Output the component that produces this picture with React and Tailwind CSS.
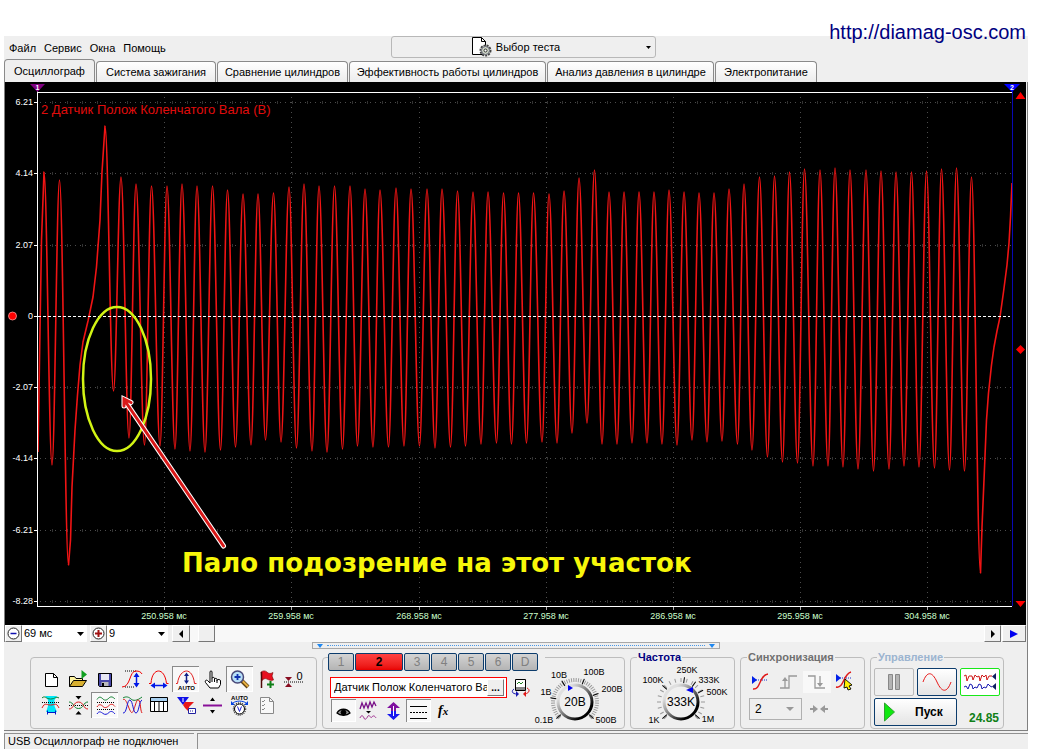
import { useState } from 'react'
import clsx from 'clsx'

const TABS = [
  { label: 'Осциллограф', width: 'w-[91px]' },
  { label: 'Система зажигания', width: 'w-[120px]' },
  { label: 'Сравнение цилиндров', width: 'w-[131px]' },
  { label: 'Эффективность работы цилиндров', width: 'w-[197px]' },
  { label: 'Анализ давления в цилиндре', width: 'w-[167px]' },
  { label: 'Электропитание', width: 'w-[102px]' },
]

const Y_TICKS = [
  ['6.21', 102], ['4.14', 173], ['2.07', 245], ['0', 316],
  ['-2.07', 387], ['-4.14', 458], ['-6.21', 530], ['-8.28', 601],
]

const X_TICKS = [
  ['250.958 мс', 164], ['259.958 мс', 291], ['268.958 мс', 419], ['277.958 мс', 546],
  ['286.958 мс', 673], ['295.958 мс', 800], ['304.958 мс', 927],
]

// Alternating extremes of the crankshaft signal: peak, trough, peak, ...
const TEETH = [
  [105, 126], [113.5, 391], [121, 177], [129, 438], [136, 184], [144.5, 445], [151.5, 186], [160, 446],
  [167, 186], [175, 449], [182, 184], [190, 451], [197, 186], [205, 452], [212.5, 186], [220.5, 450],
  [227.5, 190], [235.5, 447], [243, 194], [251, 445], [258, 194], [265.5, 440], [273.5, 193], [281, 442],
  [289, 187], [296.5, 448], [304, 184], [312, 451], [319, 186], [327, 452], [334.5, 186], [342.5, 449],
  [350, 186], [357.5, 446], [365, 189], [373, 447], [380, 190], [388.5, 447], [396, 188], [404, 446],
  [411, 189], [419.5, 446], [427, 189], [435, 448], [442, 189], [450.5, 447], [457.5, 191], [465.5, 446],
  [473, 192], [481, 444], [488, 192], [496.5, 443], [503.5, 193], [511.5, 444], [518.5, 193], [526.5, 443],
  [533.5, 193], [542, 442], [549, 194], [557, 443], [564, 191], [572, 433], [579, 178], [587, 423],
  [594.5, 170], [602, 444], [609, 192], [617, 444], [624, 192], [632, 443], [639, 192], [647, 443],
  [654, 192], [662, 444], [669, 190], [677, 445], [684, 192], [692, 440], [699, 193], [707, 442],
  [714, 193], [722, 441], [729, 189], [737.5, 444], [744, 184], [752, 450], [759.5, 177], [767.5, 457],
  [774.5, 176], [782.5, 462], [789.5, 172], [797.5, 463], [804.5, 169], [813, 466], [820, 170], [828, 466],
  [835, 168], [843, 467], [850, 170], [858, 469], [866, 170], [873.5, 471], [881, 171], [889, 469],
  [896, 172], [904, 466], [911.5, 172], [919, 467], [926.5, 171], [934.5, 468], [941.5, 169], [949.5, 470],
  [956.5, 168], [964.5, 471], [971.5, 177], [980.5, 573],
]

function smooth(points) {
  let d = ''
  for (let i = 1; i < points.length; i++) {
    const [x0, y0] = points[i - 1]
    const [x1, y1] = points[i]
    const k = (x1 - x0) * 0.36
    d += `C${x0 + k} ${y0} ${x1 - k} ${y1} ${x1} ${y1}`
  }
  return d
}

const SIGNAL =
  'M38 452L40 330' +
  'L41.500 240L44 172' +
  smooth([[44, 172], [52, 465], [59.5, 180], [68.5, 565]]) +
  'L70.500 540L72 487L75 430L77.500 395L80 365L83 342L88 321L93 297L96.500 267L100 220L102 172L105 126' +
  smooth(TEETH) +
  'L982 527L984 480L986.500 420L988.500 393L991.500 365L994 347L997 331L1000 317L1003.500 292L1007 265L1009 243L1010.500 217L1012 183'

function Scope() {
  return (
    <svg viewBox="5 82 1021 543" className="block w-full bg-black" fontFamily="'Liberation Sans', Arial, sans-serif">
      {/* grid */}
      {Y_TICKS.map(([label, y]) => (
        <g key={label}>
          {label !== '0' && (
            <>
              <path d={`M40 ${y + 0.5}H1012`} stroke="#4c4c4c" strokeDasharray="1 4" />
              <path d={`M52 ${y + 0.5}H1012`} stroke="#333" strokeWidth="3" strokeDasharray="1 14" />
            </>
          )}
          <path d={`M34 ${y + 0.5}H38`} stroke="#fff" />
          <text x="33" y={y + 3} fill="#fff" fontSize="9" textAnchor="end">{label}</text>
        </g>
      ))}
      {X_TICKS.map(([label, x]) => (
        <g key={label}>
          <path d={`M${x + 0.5} 97V606`} stroke="#4c4c4c" strokeDasharray="1 4" />
          <path d={`M${x + 0.5} 607V610`} stroke="#aaa" />
          <text x={x} y="619" fill="#cfc" fontSize="9" textAnchor="middle">{label}</text>
        </g>
      ))}

      <path d={SIGNAL} fill="none" stroke="#f01414" strokeWidth="1.600" strokeLinejoin="round" />
      <path d="M38 316.500H1010" stroke="#fff" strokeDasharray="3 2" />

      {/* axes and markers */}
      <path d="M37.500 88V607M37 92.500H1012M37 606.500H1012" stroke="#fff" fill="none" />
      <path d="M1012.500 88V606" stroke="#0808b4" />
      <path d="M30 84H45L37.500 92Z" fill="#800080" />
      <path d="M1004 84H1020L1012 92Z" fill="#0000ff" />
      <text x="37.500" y="90" fill="#fff" fontSize="7" fontWeight="bold" textAnchor="middle">1</text>
      <text x="1012" y="90" fill="#fff" fontSize="7" fontWeight="bold" textAnchor="middle">2</text>
      <path d="M1015.500 99L1020.500 92L1025.500 99Z M1015.500 601H1025.500L1020.500 607Z" fill="#ff0000" />
      <path d="M1020.500 345L1025 349.500L1020.500 354L1016 349.500Z" fill="#ff0000" />
      <circle cx="12.500" cy="316" r="4" fill="#ff0000" stroke="#ff9a9a" strokeWidth="0.800" />
      <text x="41" y="114" fill="#e00c0c" fontSize="13">2 Датчик Полож Коленчатого Вала (В)</text>

      {/* annotation */}
      <ellipse cx="117" cy="379" rx="34" ry="72" fill="none" stroke="#d2f414" strokeWidth="2.500" />
      <path d="M223.500 546L125 401M124 406V399L131 402.500" fill="none" stroke="#fff" strokeWidth="5" strokeLinecap="round" />
      <path d="M223.500 546L125 401M124 406V399L131 402.500" fill="none" stroke="#d81818" strokeWidth="3" strokeLinecap="round" />
      <text x="182" y="572" fill="#f7f70a" fontSize="26" fontWeight="bold" fontFamily="'DejaVu Sans', Verdana, sans-serif">
        Пало подозрение на этот участок
      </text>
    </svg>
  )
}

function Glyph({ children, className = 'h-[26px] w-[27px]', box = '0 0 27 26' }) {
  return (
    <svg viewBox={box} className={className} fill="none" stroke="#000" aria-hidden="true">
      {children}
    </svg>
  )
}

const TOOLS = [
  {
    name: 'Новый',
    icon: (
      <>
        <path d="M8.500 7.500H16.500L20.500 11.500V20.500H8.500Z" fill="#fff" />
        <path d="M16.500 7.500V11.500H20.500" />
      </>
    ),
  },
  {
    name: 'Открыть',
    icon: (
      <>
        <path d="M5.500 20.500V10.500H10.500L12 12.500H18.500V14.500" fill="#fff4a0" />
        <path d="M5.500 20.500L9.500 14.500H22.500L18.500 20.500Z" fill="#d8b030" />
        <path d="M17.500 4V13L23 8.500Z" fill="#10a020" stroke="none" />
      </>
    ),
  },
  {
    name: 'Сохранить',
    icon: (
      <>
        <path d="M7.500 7.500H20.500V20.500H8.500L7.500 19.500Z" fill="#4848a8" />
        <path d="M10 8H18V14H10Z" fill="#e8e8f4" stroke="none" />
        <path d="M10.500 16H17.500V20H10.500Z" fill="#bbb" stroke="none" />
        <path d="M12 17V20" strokeWidth="2" />
      </>
    ),
  },
  {
    name: 'Амплитуда',
    icon: (
      <>
        <path d="M7 5H18M7 21H17" strokeDasharray="1 1" />
        <path d="M4 21C13 21 11 5 18 5C21 5 23 6 24 8" stroke="#f00000" />
        <path d="M18.500 8V20" stroke="#0018e8" strokeWidth="1.500" />
        <path d="M15.500 11L18.500 6.500L21.500 11ZM15.500 17L18.500 21.500L21.500 17Z" fill="#0018e8" stroke="none" />
      </>
    ),
  },
  {
    name: 'Период',
    icon: (
      <>
        <path d="M4 17.500H6C6.500 9 10 5 13.500 5S20.500 9 21.500 17.500H23.500" stroke="#f00000" />
        <path d="M9 19.500H19" stroke="#0018e8" strokeWidth="1.500" />
        <path d="M10 16.500L5.500 19.500L10 22.500ZM18 16.500L22.500 19.500L18 22.500Z" fill="#0018e8" stroke="none" />
      </>
    ),
  },
  {
    name: 'Автомасштаб',
    pressed: true,
    icon: (
      <>
        <path d="M4 17.500H5.500C6.500 9 11 5 14.500 5S21.500 9 22.500 17.500H24.500" stroke="#e02020" />
        <path d="M14.500 9V15" stroke="#102088" strokeWidth="1.500" />
        <path d="M12 10L14.500 6.500L17 10ZM12 14.500L14.500 18L17 14.500Z" fill="#102088" stroke="none" />
        <text x="14.500" y="24" fontSize="6" fontWeight="bold" textAnchor="middle" fill="#000" stroke="none">AUTO</text>
      </>
    ),
  },
  {
    name: 'Рука',
    icon: (
      <path
        d="M11 22L6.500 16.500C5.500 14.500 7.500 13.500 8.500 14.500L11 17V6C11 4.500 13 4.500 13 6V12.500C13 11 15.500 11 15.500 12.500V13.500C15.500 12 18 12 18 13.500V14.500C18 13 21.500 13 21.500 15V18.500L19.500 22ZM13 12.500V16M15.500 13V16M18 14V17"
        fill="#fff"
      />
    ),
  },
  {
    name: 'Масштаб',
    pressed: true,
    icon: (
      <>
        <path d="M16 15L22 21" stroke="#604010" strokeWidth="4" />
        <path d="M16.500 15L22 20.500" stroke="#e8b040" strokeWidth="2" />
        <circle cx="11.500" cy="11" r="6" fill="#b8e0f8" stroke="#484878" strokeWidth="1.500" />
        <path d="M8.500 11H14.500M11.500 8V14" stroke="#1030b0" strokeWidth="1.800" />
      </>
    ),
  },
  {
    name: 'Маркер',
    icon: (
      <>
        <path d="M8 6C11 4 13 5 14.500 6.500S18 7.500 20 6.500L19 10L20.500 14C18 15 16 14 14 13S10.500 13 9 14.500Z" fill="#e81020" stroke="#700" strokeWidth="0.600" />
        <path d="M8.500 6V22" stroke="#500808" strokeWidth="1.500" />
        <path d="M14 18.500H21M17.500 15V22" stroke="#108018" strokeWidth="2" />
      </>
    ),
  },
  {
    name: 'Ноль',
    icon: (
      <>
        <path d="M4 16H23" strokeDasharray="1 1" />
        <path d="M5 11H12L8.500 15ZM5 21H12L8.500 17Z" fill="#880c20" stroke="none" />
        <text x="19.500" y="14" fontSize="11" textAnchor="middle" fill="#000" stroke="none">0</text>
      </>
    ),
  },
  {
    name: 'Полоса',
    icon: (
      <>
        <path d="M8 4H20L17.500 8V14L20 20H9L11 14V8Z" fill="#00e8f8" stroke="none" />
        <path d="M5 6C8 3 9 7 13.500 7S19 4 22 6" stroke="#108030" />
        <path d="M5 10.500H23" strokeDasharray="1 1" />
        <path d="M5 16C8 10 9 13 13.500 13S19 10 22 16" stroke="#e01818" />
        <path d="M11 20.500H18M10.500 18.500V22.500M18.500 18.500V22.500" stroke="#0018c8" />
      </>
    ),
  },
  {
    name: 'Совместить',
    icon: (
      <>
        <path d="M11.500 4H17.500L14.500 7.500ZM11.500 22.500H17.500L14.500 19Z" fill="#000" stroke="none" />
        <path d="M5 13.500H24" strokeDasharray="1 1" />
        <path d="M5 10C10 10 9 16.500 14.500 16.500S19 10 24 10" stroke="#108030" />
        <path d="M5 17C10 17 9 10 14.500 10S19 17 24 17" stroke="#e01818" />
      </>
    ),
  },
  {
    name: 'Раздельно',
    pressed: true,
    icon: (
      <>
        <path d="M6 7.500C8 4 10 5 12 7S16 8 18 6S22 5 24 7" stroke="#108030" />
        <path d="M6 15C8 11.500 10 12.500 12 14.500S16 15.500 18 13.500S22 12 24 14.500" stroke="#e01818" />
        <path d="M6 22C8 18.500 10 20 12 21.500S16 22.500 18 20.500S22 19.500 24 22" stroke="#1818d8" />
        <path d="M6 10.500H24M6 17.500H24" strokeDasharray="1 1" />
      </>
    ),
  },
  {
    name: 'Наложение',
    icon: (
      <>
        <path d="M5 6C8 4 11 5 13 7S19 9 24 5" stroke="#108030" />
        <path d="M5 8C8 4 11 19 13.500 20.500S18 6 20.500 8S22 18 24 21" stroke="#e01818" />
        <path d="M5 21C9 22 9 7 12 8S15 21 18 21S21 9 24 8" stroke="#1818d8" />
      </>
    ),
  },
  {
    name: 'Таблица',
    icon: (
      <>
        <path d="M5.500 5.500H22.500V19.500H5.500Z" fill="#fff" />
        <path d="M6 6H22V9H6Z" fill="#a8d0f0" stroke="none" />
        <path d="M5.500 9.500H22.500M9.500 9.500V19.500M14 9.500V19.500M18.500 9.500V19.500" />
      </>
    ),
  },
  {
    name: 'Фильтр',
    icon: (
      <>
        <path d="M5 5H17L11 13Z" fill="#1010e8" stroke="none" />
        <path d="M13 10H22L17 15V20L13 16L11 13Z" fill="#e81818" stroke="none" />
        <path d="M11 6V10" stroke="#fff" />
        <path d="M16.500 16.500H23.500V21.500H16.500Z" fill="#fff" stroke="#2020a0" />
        <path d="M18 19H22" stroke="#2020a0" strokeDasharray="1 1" />
      </>
    ),
  },
  {
    name: 'Сдвиг',
    icon: (
      <>
        <path d="M4 13.500H23" stroke="#881098" strokeWidth="2" />
        <path d="M11 9L13.500 5.500L16 9ZM11 18L13.500 21.500L16 18Z" fill="#000" stroke="none" />
      </>
    ),
  },
  {
    name: 'Авто вольтметр',
    icon: (
      <>
        <text x="13.500" y="8" fontSize="6" fontWeight="bold" textAnchor="middle" fill="#000" stroke="none">AUTO</text>
        <path d="M7 11C10 8.500 17 8.500 20 11" stroke="#0040e0" />
        <path d="M5 9V13H9ZM22 9V13H18Z" fill="#0040e0" stroke="none" />
        <circle cx="13.500" cy="17" r="6" strokeWidth="1.500" strokeDasharray="1 1" stroke="#444" />
        <circle cx="13.500" cy="17" r="5" fill="#fff" />
        <path d="M11.500 14.500L13.500 19.500L15.500 14.500" stroke="#2020d0" />
      </>
    ),
  },
  {
    name: 'Список',
    icon: (
      <g stroke="#888">
        <path d="M7.500 5.500H16.500L20.500 9.500V21.500H7.500Z" fill="#f8f8f8" />
        <path d="M16.500 5.500V9.500H20.500" />
        <path d="M9 9L10 10L12 8M9 13L10 14L12 12M9 17L10 18L12 16" />
      </g>
    ),
  },
]

function Toolbar() {
  return (
    <div className="mt-[6px] flex w-[287px] shrink-0 flex-wrap content-start rounded-[4px] border border-[#bdbdbd] pt-2 pl-[6px]">
      {TOOLS.map((tool) => (
        <button
          key={tool.name}
          aria-label={tool.name}
          className={clsx(
            'h-[26px] w-[27px]',
            tool.pressed && 'bg-[#f8f8f8] shadow-[inset_1px_1px_0_#8a8a8a,inset_-1px_-1px_0_#fff]'
          )}
        >
          <Glyph>{tool.icon}</Glyph>
        </button>
      ))}
    </div>
  )
}

function Knob({ name, value, labels, fine, pointer }) {
  const ticks = []
  const step = fine ? 6 : 15
  for (let a = -135; a <= 135; a += step) ticks.push(a)
  return (
    <svg viewBox="0 0 90 64" className="h-16 w-[90px]" role="img" aria-label={name} fontFamily="'Liberation Sans', Arial, sans-serif">
      <defs>
        <linearGradient id={`rim-${name}`} x1="0" y1="0" x2="1" y2="1">
          <stop offset="0.200" stopColor="#e0e0e0" />
          <stop offset="0.550" stopColor="#666" />
          <stop offset="0.800" stopColor="#000" />
        </linearGradient>
      </defs>
      {ticks.map((a) => (
        <path key={a} d="M41 14V18" stroke="#999" transform={`rotate(${a} 41 38)`} />
      ))}
      {labels.map(([text, x, y, angle]) => (
        <g key={text}>
          <path d="M41 13V19" stroke="#000" transform={`rotate(${angle} 41 38)`} />
          <text x={x} y={y} fontSize="9" textAnchor="middle">{text}</text>
        </g>
      ))}
      <circle cx="41" cy="38" r="17" fill="#f0f0f0" stroke={`url(#rim-${name})`} strokeWidth="3" />
      <path d={pointer} fill="#0000f0" />
      <text x="41" y="42" fontSize="12" textAnchor="middle">{value}</text>
    </svg>
  )
}

const CHANNELS = ['1', '2', '3', '4', '5', '6', 'D']

const MODES = [
  {
    name: 'Показать',
    pressed: true,
    icon: (
      <>
        <path d="M6 14C9 9 16 9 19 14C16 17 9 17 6 14Z" fill="#999" strokeWidth="1.300" />
        <circle cx="12.500" cy="13.500" r="2.500" fill="#000" />
      </>
    ),
  },
  {
    name: 'Сглаживание',
    icon: (
      <>
        <path d="M4 10L6 4L8 9L10 4L12 9L14 3L16 8L18 3L20 7" stroke="#781088" strokeWidth="1.300" />
        <path d="M10 12H15L12.500 14.500Z" fill="#000" stroke="none" />
        <path d="M4 19C5 16 7 16 8 19S11 19 12 17S15 20 16 18S19 17 20 19" stroke="#a03090" />
      </>
    ),
  },
  {
    name: 'Инверсия',
    icon: (
      <>
        <path d="M12.500 3L19 9H15V12H10V9H6Z" fill="#8010a0" stroke="none" />
        <path d="M12.500 21L19 15H15V12H10V15H6Z" fill="#1818f0" stroke="none" />
        <path d="M12.500 7V17" stroke="#fff" />
      </>
    ),
  },
  {
    name: 'Уровни',
    pressed: true,
    icon: (
      <>
        <path d="M4 7.500H21M4 19.500H21" />
        <path d="M4 13.500H21" strokeDasharray="2 1" />
      </>
    ),
  },
  {
    name: 'Функция',
    icon: (
      <text x="7" y="16" fontSize="14" fontStyle="italic" fontWeight="bold" fill="#000" stroke="none" fontFamily="'Liberation Serif', serif">
        f<tspan fontSize="11">x</tspan>
      </text>
    ),
  },
]

function ChannelPanel() {
  const [active, setActive] = useState('2')
  return (
    <div className="mt-[6px] flex w-[303px] shrink-0 rounded-[4px] border border-[#bdbdbd] pl-[5px]">
      <div className="-mt-[5px] w-[206px]">
        <div className="flex w-[217px] gap-px bg-[#efefef]">
          {CHANNELS.map((ch) => (
            <button
              key={ch}
              onClick={() => setActive(ch)}
              className={clsx(
                'h-[18px] rounded-[2px] border border-[#0c3c6c] text-[12px] leading-[16px]',
                ch === active
                  ? 'w-12 bg-linear-to-b from-[#ff4040] to-[#e80000] font-bold text-black'
                  : 'w-[26px] bg-linear-to-b from-[#d4d4d4] to-[#b4b4b4] text-[#808080]'
              )}
            >
              {ch}
            </button>
          ))}
        </div>
        <div className="mt-[6px] flex items-center gap-1 pl-0.5">
          <div className="flex h-[21px] w-[177px] items-center border border-[#ff0000] bg-white pr-0.5">
            <input
              aria-label="Название канала"
              readOnly
              value="Датчик Полож Коленчатого Вала"
              className="min-w-0 flex-1 pl-[3px] text-[11px]"
            />
            <button
              aria-label="Выбрать датчик"
              className="h-[17px] w-[17px] border border-t-white border-r-[#777] border-b-[#777] border-l-white bg-[#efefef] text-[10px] leading-[10px] font-bold"
            >
              ...
            </button>
          </div>
          <button aria-label="Сменить датчик" className="h-5 w-5">
            <Glyph className="h-5 w-5" box="0 0 20 20">
              <path d="M4.500 1.500H14.500V12.500H4.500Z" fill="#fff" />
              <path d="M5 9H14V12H5Z" fill="#888" stroke="none" />
              <path d="M6 6L8 4L10 6L12 4" stroke="#208020" />
              <path d="M3 11C0 13 1 16 6 16" stroke="#1818b0" />
              <path d="M5 13L8 16L5 19Z" fill="#1818b0" stroke="none" />
              <path d="M16 10C19 11 19 15 14 16" stroke="#e01818" />
              <path d="M15 13L12 16L15 19Z" fill="#e01818" stroke="none" />
            </Glyph>
          </button>
        </div>
        <div className="mt-px flex pl-[3px]">
          {MODES.map((mode) => (
            <button
              key={mode.name}
              aria-label={mode.name}
              className={clsx(
                'h-[23px] w-[25px]',
                mode.pressed && 'bg-[#f8f8f8] shadow-[inset_1px_1px_0_#8a8a8a,inset_-1px_-1px_0_#fff]'
              )}
            >
              <Glyph className="h-[23px] w-[25px]" box="0 0 25 23">{mode.icon}</Glyph>
            </button>
          ))}
        </div>
      </div>
      <div className="pt-[6px]">
        <Knob
          name="Вольты"
          value="20В"
          fine
          pointer="M34 21V27L39 24Z"
          labels={[
            ['0.1В', 10, 59, -132], ['1В', 12, 31, -80], ['10В', 25, 14, -32],
            ['100В', 60, 11, 22], ['200В', 78, 28, 70], ['500В', 72, 59, 132],
          ]}
        />
      </div>
    </div>
  )
}

function Group({ title, className, titleClass, children }) {
  return (
    <fieldset className={clsx('shrink-0 rounded-[4px] border border-[#bdbdbd]', className)}>
      <legend className={clsx('ml-1.5 px-px text-[11px] leading-[13px] font-bold', titleClass)}>{title}</legend>
      {children}
    </fieldset>
  )
}

const SYNC = [
  {
    name: 'По уровню',
    icon: (
      <>
        <path d="M5 9H21" stroke="#1830d0" strokeDasharray="1 1" />
        <path d="M5 5V13L10 9Z" fill="#0020e8" stroke="none" />
        <path d="M6 18C14 19 12 4 21 3" stroke="#e01818" strokeWidth="1.400" />
      </>
    ),
  },
  {
    name: 'По фронту',
    icon: (
      <g stroke="#999" strokeWidth="1.300">
        <path d="M5 17H14V5H22M10 17V8" />
        <path d="M7 10L10 6L13 10Z" fill="#999" stroke="none" />
      </g>
    ),
  },
  {
    name: 'По спаду',
    pressed: true,
    icon: (
      <g stroke="#999" strokeWidth="1.300">
        <path d="M5 5H12V17H22M17 5V14" />
        <path d="M14 12L17 16L20 12Z" fill="#999" stroke="none" />
      </g>
    ),
  },
  {
    name: 'Указать',
    icon: (
      <>
        <path d="M5 7H21" stroke="#1830d0" strokeDasharray="1 1" />
        <path d="M5 3V11L10 7Z" fill="#0020e8" stroke="none" />
        <path d="M5 16C13 18 12 3 20 1" stroke="#e01818" strokeWidth="1.400" />
        <path d="M14 8L21 14L18 15L20 18L17 19L16 16L13 17Z" fill="#fff000" strokeWidth="0.900" />
      </>
    ),
  },
]

function BottomPanel() {
  return (
    <div className="flex items-stretch gap-[5px] pt-[2px] pb-px pl-[26px]">
      <Toolbar />
      <ChannelPanel />

      <Group title="Частота" className="w-[105px]" titleClass="text-[#000080]">
        <div className="pl-[9px]">
          <Knob
            name="Частота"
            value="333K"
            pointer="M46 26L53 23V29Z"
            labels={[
              ['1K', 14, 59, -132], ['100K', 13, 19, -48], ['250K', 47, 9, 8],
              ['333K', 69, 19, 36], ['500K', 77, 31, 62], ['1M', 68, 58, 132],
            ]}
          />
        </div>
      </Group>

      <Group title="Синхронизация" className="w-[125px]" titleClass="text-[#707070]">
        <div className="flex pt-[7px] pl-[6px]">
          {SYNC.map((s) => (
            <button key={s.name} aria-label={s.name} className={clsx('h-[22px] w-7', s.pressed && 'bg-[#f8f8f8]')}>
              <Glyph className="h-[22px] w-7" box="0 0 28 22">{s.icon}</Glyph>
            </button>
          ))}
        </div>
        <div className="mt-[5px] flex items-center gap-2 pl-2">
          <div className="relative">
            <select aria-label="Канал синхронизации" className="block h-[22px] w-[53px] appearance-none border border-[#b0b0b0] bg-[#efefef] pl-[5px] text-[12px]">
              <option>2</option>
            </select>
            <svg viewBox="0 0 8 4" className="pointer-events-none absolute top-[9px] right-2 h-1 w-2">
              <path d="M0 0H8L4 4Z" fill="#999" />
            </svg>
          </div>
          <svg viewBox="0 0 18 10" className="h-[10px] w-[18px]" fill="#999">
            <path d="M0 4H3V1L8 5L3 9V6H0ZM18 4H15V1L10 5L15 9V6H18Z" />
          </svg>
        </div>
      </Group>

      <Group title="Управление" className="w-[134px]" titleClass="text-[#9cb4d0]">
        <div className="flex gap-[3px] pt-1 pl-[3px]">
          <button aria-label="Пауза" className="flex h-7 w-10 items-center justify-center rounded-[2px] border border-[#bbb]">
            <svg viewBox="0 0 12 16" className="h-4 w-3" fill="#b4b4b4" stroke="#888">
              <path d="M0.500 0.500H4.500V15.500H0.500ZM7.500 0.500H11.500V15.500H7.500Z" />
            </svg>
          </button>
          <button aria-label="Однократно" className="flex h-7 w-10 items-center justify-center rounded-[2px] border border-[#0c3c6c] bg-linear-to-b from-white to-[#e4e4e4]">
            <svg viewBox="0 0 30 20" className="h-5 w-[30px]" fill="none" stroke="#e81818">
              <path d="M1 10C5 -1 10 -1 15 10S25 21 29 10" />
            </svg>
          </button>
          <button aria-label="Непрерывно" className="flex h-7 w-10 items-center justify-center rounded-[2px] border border-[#18e818] bg-white">
            <svg viewBox="0 0 34 22" className="h-[22px] w-[34px]" fill="none">
              <path d="M1 5L3 4L4 10L6 5L9 5L10 9L12 4L14 6L16 5L17 10L19 4L21 6L23 4L24 9L26 5L29 5" stroke="#d01818" />
              <path d="M1 16L3 15L5 18L7 13L9 14L10 18L12 16L14 17L16 13L18 14L19 18L21 16L23 17L25 13L27 15L29 16" stroke="#1818b0" />
              <path d="M33 2V9L29 5.500ZM33 12V19L29 15.500Z" fill="#102060" />
            </svg>
          </button>
        </div>
        <div className="flex pt-0.5 pl-[3px]">
          <button className="flex h-7 w-[83px] items-center rounded-[2px] border border-[#0c3c6c] bg-linear-to-b from-white to-[#e4e4e4] pl-[9px] text-[12px] font-bold">
            <svg viewBox="0 0 11 20" className="mr-5 h-5 w-[11px]">
              <path d="M0.500 1V19L10.500 10Z" fill="#10e810" stroke="#30a030" />
            </svg>
            Пуск
          </button>
          <output className="flex-1 pt-3 pr-1 text-right text-[12px] leading-[16px] font-bold text-[#108018]">24.85</output>
        </div>
      </Group>
    </div>
  )
}

const RAISED = 'flex h-[17px] shrink-0 items-center justify-center border border-t-white border-r-[#777] border-b-[#777] border-l-white bg-[#efefef]'

function ZoomSelect({ label, value, className }) {
  return (
    <div className="relative">
      <select aria-label={label} className={clsx('block h-[17px] appearance-none bg-white pl-0.5 text-[11px] leading-[17px]', className)}>
        <option>{value}</option>
      </select>
      <svg viewBox="0 0 7 4" className="pointer-events-none absolute top-[7px] right-[3px] h-1 w-[7px]">
        <path d="M0 0H7L3.500 4Z" />
      </svg>
    </div>
  )
}

function TimeBar() {
  return (
    <div className="flex h-[17px] bg-[#f8f8f8]">
      <button aria-label="Уменьшить" className={clsx(RAISED, 'w-[17px]')}>
        <svg viewBox="0 0 13 13" className="h-[13px] w-[13px]" fill="#fff" stroke="#222">
          <circle cx="6.500" cy="6.500" r="5.500" />
          <path d="M3.500 6.500H9.500" stroke="#1010b0" strokeWidth="1.500" />
        </svg>
      </button>
      <ZoomSelect label="Развертка" value="69 мс" className="w-[65px]" />
      <div className="w-[3px] bg-[#efefef]" />
      <button aria-label="Увеличить" className={clsx(RAISED, 'w-[17px]')}>
        <svg viewBox="0 0 13 13" className="h-[13px] w-[13px]" fill="#fff" stroke="#222">
          <circle cx="6.500" cy="6.500" r="5.500" />
          <path d="M3 6.500H10M6.500 3V10" stroke="#a01010" strokeWidth="2" />
        </svg>
      </button>
      <ZoomSelect label="Масштаб" value="9" className="w-[61px]" />
      <div className="w-1 bg-[#efefef]" />
      <button aria-label="Влево" className={clsx(RAISED, 'w-[18px]')}>
        <svg viewBox="0 0 4 8" className="h-2 w-1"><path d="M4 0V8L0 4Z" /></svg>
      </button>
      <div className="flex-1 pl-2">
        <div className={clsx(RAISED, 'w-[17px]')} />
      </div>
      <button aria-label="Вправо" className={clsx(RAISED, 'w-[17px]')}>
        <svg viewBox="0 0 4 8" className="h-2 w-1"><path d="M0 0V8L4 4Z" /></svg>
      </button>
      <button aria-label="В конец" className={clsx(RAISED, 'ml-px w-6')}>
        <svg viewBox="0 0 8 8" className="h-2 w-2"><path d="M0 0V8L8 4Z" fill="#0000f0" /></svg>
      </button>
    </div>
  )
}

export default function App() {
  const [tab, setTab] = useState(0)

  return (
    <div className="relative min-h-screen bg-white pt-9 pr-3 pl-1 font-['Liberation_Sans',Arial,sans-serif] text-[11px] text-black">
      <a href="http://diamag-osc.com" className="absolute top-[22px] right-[14px] text-[20px] leading-[20px] text-[#000080]">
        http://diamag-osc.com
      </a>

      <div className="border-b border-[#808080] bg-[#efefef]">
        <div className="flex h-[23px] items-start">
          <nav className="flex w-[387px] gap-2 pt-[5px] pl-[5px] leading-[14px]">
            {['Файл', 'Сервис', 'Окна', 'Помощь'].map((item) => (
              <button key={item}>{item}</button>
            ))}
          </nav>
          <button className="flex h-[22px] w-[265px] items-center rounded-[3px] border border-[#b8b8b8] pr-1">
            <span className="flex flex-1 items-center justify-center gap-1 pr-1.5">
              <svg viewBox="0 0 20 20" className="h-5 w-5" fill="none" stroke="#000">
                <path d="M0.500 0.500H9.500L13.500 4.500V17.500H0.500Z" fill="#fff" />
                <path d="M9.500 0.500V4.500H13.500" />
                <circle cx="13.500" cy="13.500" r="5" fill="#c8d0c0" strokeWidth="2" strokeDasharray="2 1" stroke="#444" />
                <circle cx="13.500" cy="13.500" r="4" fill="#d0d8c8" stroke="#667" />
                <circle cx="13.500" cy="13.500" r="1.500" fill="#fff" stroke="#333" />
              </svg>
              Выбор теста
            </span>
            <svg viewBox="0 0 5 3" className="h-[3px] w-[5px]"><path d="M0 0H5L2.500 3Z" /></svg>
          </button>
        </div>

        <div role="tablist" className="flex h-[23px] items-end gap-px">
          {TABS.map((t, i) => (
            <button
              key={t.label}
              role="tab"
              aria-selected={i === tab}
              onClick={() => setTab(i)}
              className={clsx(
                'shrink-0 rounded-t-[4px] border border-b-0 border-[#8a8a8a] whitespace-nowrap',
                t.width,
                i === tab ? 'h-[23px] bg-[#efefef]' : 'h-[21px] bg-linear-to-b from-white to-[#ececec]'
              )}
            >
              {t.label}
            </button>
          ))}
        </div>

        <div className="border-r border-[#808080]">
          <main className="border-l border-[#808080] pr-px">
            <Scope />
            <TimeBar />
          </main>

          <div className="mx-auto flex h-[7px] w-[408px] items-center border border-[#a8a8a8] px-1">
            <svg viewBox="0 0 6 4" className="h-1 w-[6px]"><path d="M0 0H6L3 4Z" fill="#2088f0" /></svg>
            <div className="mx-1 h-0 flex-1 border-t border-dotted border-[#4898e8]" />
            <svg viewBox="0 0 6 4" className="h-1 w-[6px]"><path d="M0 0H6L3 4Z" fill="#2088f0" /></svg>
          </div>

          <BottomPanel />
        </div>
      </div>

      <footer className="flex gap-[3px] bg-[#efefef] pt-[2px] leading-[15px]">
        <div className="w-[190px] border-t border-l border-[#909090] pl-[3px]">USB Осциллограф не подключен</div>
        <div className="flex-1 border-t border-l border-[#909090]" />
      </footer>
    </div>
  )
}
